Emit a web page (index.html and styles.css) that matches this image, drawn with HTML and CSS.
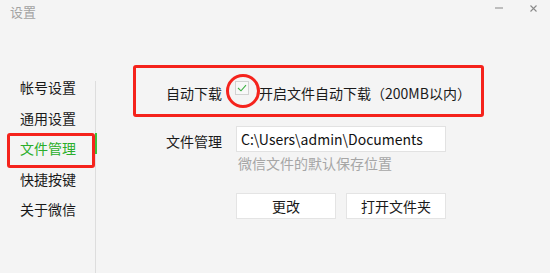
FILE: index.html
```html
<!DOCTYPE html>
<html lang="zh-CN">
<head>
<meta charset="utf-8">
<title>设置</title>
<link rel="stylesheet" href="styles.css">
</head>
<body>
<div class="window">
  <div class="titlebar">
    <span class="title">设置</span>
    <div class="controls">
      <svg class="min" width="8" height="2" viewBox="0 0 8 2"><rect width="8" height="2" fill="#bdbdbd"/></svg>
      <svg class="close" width="7" height="7" viewBox="0 0 7 7"><path d="M0.5 0.5 L6.5 6.5 M6.5 0.5 L0.5 6.5" stroke="#8a8a8a" stroke-width="1.1" fill="none"/></svg>
    </div>
  </div>
  <div class="main">
    <nav class="sidebar">
      <div class="nav-item">帐号设置</div>
      <div class="nav-item">通用设置</div>
      <div class="nav-item active">文件管理</div>
      <div class="nav-item">快捷按键</div>
      <div class="nav-item">关于微信</div>
    </nav>
    <div class="divider"></div>
    <section class="content">
      <div class="highlight-row">
        <span class="label">自动下载</span>
        <span class="checkbox">
          <svg width="10" height="8" viewBox="0 0 10 8"><path d="M1 4 L4 6.8 L9 1.2" stroke="#3cb043" stroke-width="1.1" fill="none"/></svg>
          <span class="circle"></span>
        </span>
        <span class="check-text">开启文件自动下载（200MB以内）</span>
      </div>
      <div class="form">
        <span class="label">文件管理</span>
        <div class="field">
          <div class="input">C:\Users\admin\Documents</div>
          <div class="hint">微信文件的默认保存位置</div>
          <div class="buttons">
            <button class="btn">更改</button>
            <button class="btn">打开文件夹</button>
          </div>
        </div>
      </div>
    </section>
  </div>
</div>
</body>
</html>
```

FILE: styles.css
```css
* { box-sizing: border-box; }
html, body {
  margin: 0;
  padding: 0;
  background: #f4f4f4;
}
body {
  font-family: "Noto Sans CJK SC", "Noto Sans", sans-serif;
  font-size: 14px;
  color: #1a1a1a;
  width: 550px;
  height: 273px;
  overflow: hidden;
}
.window {
  width: 550px;
  height: 273px;
  display: flex;
  flex-direction: column;
}
.titlebar {
  height: 24px;
  display: flex;
  align-items: flex-start;
  padding: 0 13px 0 10px;
}
.title {
  font-size: 13px;
  line-height: 13px;
  margin-top: 5px;
  color: #a3a3a3;
}
.controls {
  margin-left: auto;
  display: flex;
  align-items: flex-start;
}
.controls .min { margin-top: 7px; display: block; }
.controls .close { margin-top: 5px; margin-left: 27px; display: block; }

.main {
  flex: 1;
  display: flex;
  padding-top: 41px;
}
.sidebar {
  width: 95px;
  padding-top: 7px;
  display: flex;
  flex-direction: column;
}
.nav-item {
  height: 30.5px;
  line-height: 30px;
  padding-left: 20px;
  position: relative;
  color: #1a1a1a;
}
.nav-item.active {
  color: #2aae2a;
}
.nav-item.active::before {
  content: "";
  position: absolute;
  left: 7px;
  right: 0;
  top: 0;
  height: 29px;
  border: 3px solid #f5231c;
  border-radius: 3px;
}
.nav-item.active::after {
  content: "";
  position: absolute;
  right: -2px;
  top: 0;
  width: 2px;
  height: 21px;
  background: #3cc03c;
}
.divider {
  width: 1px;
  margin-top: 16px;
  background: #dddddd;
}
.content {
  flex: 1;
  padding-left: 37px;
}
.highlight-row {
  width: 351px;
  height: 52px;
  border: 3px solid #f5231c;
  border-radius: 3px;
  display: flex;
  align-items: center;
  padding: 4px 0 0 30px;
}
.label {
  width: 56px;
  line-height: 16px;
}
.checkbox {
  position: relative;
  width: 14px;
  height: 14px;
  margin-left: 13px;
  margin-right: 10px;
  margin-bottom: 10px;
  border: 1px solid #d2d2d2;
  background: #f8f8f8;
  display: flex;
  align-items: center;
  justify-content: center;
}
.checkbox svg { display: block; }
.circle {
  position: absolute;
  left: -10px;
  top: -8px;
  width: 34px;
  height: 34px;
  border: 3px solid #f5231c;
  border-radius: 50%;
}
.check-text {
  line-height: 16px;
}
.form {
  margin-left: 33px;
  margin-top: 9px;
  display: grid;
  grid-template-columns: 56px auto;
  column-gap: 14px;
}
.form > .label {
  margin-top: 7px;
}
.input {
  width: 210px;
  height: 26px;
  background: #ffffff;
  border: 1px solid #e2e2e2;
  line-height: 24px;
  padding-left: 4px;
  color: #111;
}
.hint {
  margin-top: 3px;
  padding-left: 2px;
  line-height: 16px;
  color: #a6a6a6;
}
.buttons {
  display: flex;
  gap: 10px;
  margin-top: 22px;
}
.btn {
  width: 100px;
  height: 26px;
  background: #ffffff;
  border: 1px solid #e4e4e4;
  font-family: inherit;
  font-size: 14px;
  color: #1a1a1a;
  padding: 0;
  line-height: 24px;
}
```
